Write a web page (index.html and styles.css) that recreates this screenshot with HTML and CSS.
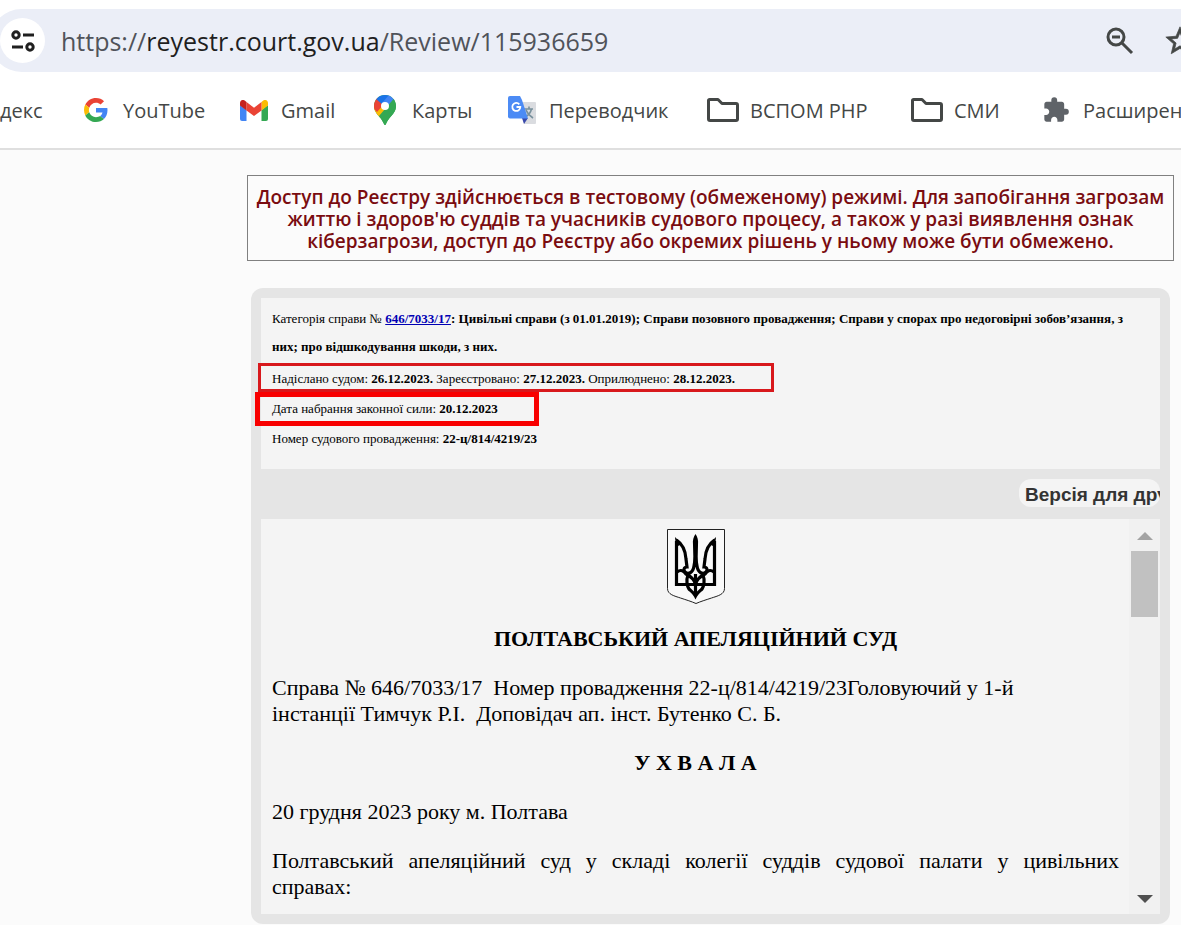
FILE: index.html
```html
<!DOCTYPE html>
<html lang="uk">
<head>
<meta charset="utf-8">
<meta name="viewport" content="width=device-width, initial-scale=1">
<title>Єдиний державний реєстр судових рішень</title>
<link rel="stylesheet" href="styles.css">
</head>
<body>
<header class="chrome">
  <div class="address">
    <button class="site-info" type="button" aria-label="Відомості про сайт">
      <svg width="24" height="24" viewBox="0 0 24 24" fill="none" stroke="#1f1f1f" stroke-width="3"><circle cx="5" cy="6" r="3.2"/><path d="M12 6h11M1 18h11"/><circle cx="19" cy="18" r="3.2"/></svg>
    </button>
    <div class="url"><span class="dim">https://</span>reyestr.court.gov.ua<span class="dim">/Review/115936659</span></div>
    <button class="tool" type="button" aria-label="Масштаб">
      <svg width="28" height="28" viewBox="0 0 28 28" fill="none" stroke="#444746" stroke-width="3"><circle cx="10" cy="10" r="8"/><path d="M6 10h8M15.500 15.500L26 26"/></svg>
    </button>
    <button class="tool star" type="button" aria-label="Закладка">
      <svg width="34" height="34" viewBox="0 0 24 24" fill="#444746" stroke="#444746" stroke-width=".5"><path d="M22 9.240l-7.190-.62L12 2 9.190 8.630 2 9.240l5.460 4.730L5.820 21 12 17.270 18.180 21l-1.630-7.030L22 9.240zM12 15.400l-3.760 2.270 1-4.280-3.320-2.880 4.380-.38L12 6.100l1.710 4.040 4.380.38-3.320 2.880 1 4.280L12 15.400z"/></svg>
    </button>
  </div>
  <nav class="bookmarks">
    <a href="#" class="bookmark">декс</a>
    <a href="#" class="bookmark"><span class="icon"><svg width="24" height="24" viewBox="0 0 48 48"><path fill="#ea4335" d="M24 9.500c3.540 0 6.710 1.220 9.210 3.600l6.850-6.850C35.900 2.380 30.470 0 24 0 14.620 0 6.510 5.380 2.560 13.220l7.980 6.190C12.430 13.720 17.740 9.500 24 9.500z"/><path fill="#4285f4" d="M46.980 24.550c0-1.570-.15-3.090-.38-4.550H24v9.020h12.940c-.58 2.960-2.260 5.480-4.780 7.180l7.730 6c4.510-4.180 7.090-10.360 7.090-17.650z"/><path fill="#fbbc05" d="M10.530 28.590c-.48-1.450-.76-2.990-.76-4.590s.27-3.140.76-4.590l-7.980-6.190C.92 16.460 0 20.120 0 24s.92 7.540 2.560 10.780l7.970-6.190z"/><path fill="#34a853" d="M24 48c6.480 0 11.930-2.130 15.890-5.810l-7.730-6c-2.150 1.450-4.920 2.300-8.160 2.300-6.260 0-11.570-4.220-13.470-9.910l-7.980 6.190C6.510 42.620 14.620 48 24 48z"/></svg></span>YouTube</a>
    <a href="#" class="bookmark"><span class="icon"><svg width="28" height="21" viewBox="0 0 28 21"><path fill="#4285f4" d="M2 21h4.500V10L0 5v14a2 2 0 0 0 2 2z"/><path fill="#34a853" d="M21.500 21H26a2 2 0 0 0 2-2V5l-6.500 5z"/><path fill="#fbbc04" d="M21.500 2v8.500L28 5.500V3c0-2.600-2.800-4-5-2.300z"/><path fill="#ea4335" d="M6.500 10.500V2L14 7.700 21.500 2v8.500L14 16z"/><path fill="#c5221f" d="M0 3v2.500l6.500 5V2L5 .7C2.800-1 0 .4 0 3z"/></svg></span>Gmail</a>
    <a href="#" class="bookmark"><span class="icon"><svg width="22" height="30" viewBox="0 0 22 30"><defs><clipPath id="pin"><path d="M11 0C5 0 0 4.800 0 11c0 5 3 8 6 11.500 2 2.500 3 4.500 4 6.500.5 1.200 1.500 1.200 2 0 1-2.500 2-4 4-6.500 3-3.500 6-6.500 6-11.500C22 4.800 17 0 11 0z"/></clipPath></defs><g clip-path="url(#pin)"><path fill="#34a853" d="M0 0h22v30H0z"/><path fill="#fbbc04" d="M0 13v9l5 2L16 12l-5-6z"/><path fill="#ea4335" d="M0 0v14l3 3 8-9-8-6z"/><path fill="#1a73e8" d="M2 4l7 6 7-10H2z"/><path fill="#4285f4" d="M15 0L8 8l5 5 9-9z"/><path fill="#34a853" d="M20 3.500L5 21v9h17V3z"/></g><circle cx="11" cy="11" r="4" fill="#fff"/></svg></span>Карты</a>
    <a href="#" class="bookmark"><span class="icon"><svg width="28" height="28" viewBox="0 0 28 28"><path fill="#dadce0" d="M13 6h14a1 1 0 0 1 1 1v20a1 1 0 0 1-1 1H16z"/><path fill="#3949ab" d="M14 22h6l-4 6z"/><path fill="none" stroke="#78909c" stroke-width="1.600" d="M16 13h9M21 10.500V13M23.500 13c-1 4-3.500 6.500-6 8M18 14c1.500 3.500 4 6 7 8"/><path fill="#4c8bf5" d="M2 0h10l2 4 6 18.500H2a2 2 0 0 1-2-2V2a2 2 0 0 1 2-2z"/><path fill="none" stroke="#fff" stroke-width="1.800" d="M11.300 8.300A4 4 0 1 0 12.300 11H8.500"/></svg></span>Переводчик</a>
    <a href="#" class="bookmark"><span class="icon"><svg width="32" height="24" viewBox="0 0 32 24" fill="none" stroke="#444746" stroke-width="3" stroke-linejoin="round"><path d="M2.500 1.500h8.500l4 4H29a1.500 1.500 0 0 1 1.500 1.500v14a1.500 1.500 0 0 1-1.500 1.500H3A1.500 1.500 0 0 1 1.500 21V2.500a1 1 0 0 1 1-1z"/></svg></span>ВСПОМ PHP</a>
    <a href="#" class="bookmark"><span class="icon"><svg width="32" height="24" viewBox="0 0 32 24" fill="none" stroke="#444746" stroke-width="3" stroke-linejoin="round"><path d="M2.500 1.500h8.500l4 4H29a1.500 1.500 0 0 1 1.500 1.500v14a1.500 1.500 0 0 1-1.500 1.500H3A1.500 1.500 0 0 1 1.500 21V2.500a1 1 0 0 1 1-1z"/></svg></span>СМИ</a>
    <a href="#" class="bookmark"><span class="icon"><svg width="28" height="28" viewBox="0 0 24 24" fill="#5f6368"><path d="M20.500 11H19V7c0-1.100-.9-2-2-2h-4V3.500a2.500 2.500 0 0 0-5 0V5H4c-1.100 0-1.990.9-1.990 2v3.800H3.500c1.490 0 2.700 1.210 2.700 2.700s-1.210 2.700-2.700 2.700H2V20c0 1.100.9 2 2 2h3.800v-1.500c0-1.490 1.210-2.700 2.700-2.700s2.700 1.210 2.700 2.700V22H17c1.100 0 2-.9 2-2v-4h1.500a2.500 2.500 0 0 0 0-5z"/></svg></span>Расширени</a>
  </nav>
</header>
<main class="page">
  <p class="notice">Доступ до Реєстру здійснюється в тестовому (обмеженому) режимі. Для запобігання загрозам<br>життю і здоров'ю суддів та учасників судового процесу, а також у разі виявлення ознак<br>кіберзагрози, доступ до Реєстру або окремих рішень у ньому може бути обмежено.</p>
  <div class="panel">
    <section class="meta">
      <p class="category">Категорія справи № <a href="#">646/7033/17</a><b>: Цивільні справи (з 01.01.2019); Справи позовного провадження; Справи у спорах про недоговірні зобов’язання, з<br>них; про відшкодування шкоди, з них.</b></p>
      <p class="row dates">Надіслано судом: <b>26.12.2023.</b> Зареєстровано: <b>27.12.2023.</b> Оприлюднено: <b>28.12.2023.</b></p>
      <p class="row force">Дата набрання законної сили: <b>20.12.2023</b></p>
      <p class="row">Номер судового провадження: <b>22-ц/814/4219/23</b></p>
    </section>
    <div class="actions"><button class="print" type="button">Версія для дру</button></div>
    <div class="viewer">
      <article class="document">
        <svg class="emblem" width="58" height="75" viewBox="0 0 58 75" role="img" aria-label="Герб України"><path d="M.5.500h57v59c0 6-7 7.500-13 9.500-6 2-11 3.500-15.500 5.500-4.500-2-9.500-3.500-15.500-5.500C7.500 67 .5 65.500.5 59.500z" fill="#f9f9f9" stroke="#222"/><g fill="none" stroke="#000" stroke-width="3.200"><path d="M9.500 12v43.500h38V12"/><path d="M9.500 11c6 4 9 10 9.500 19l1 8c-3 0-4 3-2 5 3 3 8 1 9-6l1.500-9 1.500 9c1 7 6 9 9 6 2-2 1-5-2-5l1-8c.5-9 3.500-15 9.500-19"/><path d="M10 43c4-3 7-1 9 2 4 2 8 5 9.500 10 1.500-5 5.500-8 9.500-10 2-3 5-5 9-2"/><path d="M21 46c-2 5-1 11 1 14 2 2 5 4 6.500 7 1.500-3 4.500-5 6.500-7 2-3 3-9 1-14M28.500 45v21"/></g><path d="M28.500 5c2 3 3 6 2.500 11l-.5 20h-4L26 16c-.5-5 .5-8 2.500-11zM8 8l7 7-6 3zM49 8l-7 7 6 3z"/></svg>
        <h1>ПОЛТАВСЬКИЙ АПЕЛЯЦІЙНИЙ СУД</h1>
        <p>Справа № 646/7033/17&nbsp; Номер провадження 22-ц/814/4219/23Головуючий у 1-й<br>інстанції Тимчук Р.І.&nbsp; Доповідач ап. інст. Бутенко С. Б.</p>
        <h2>У Х В А Л А</h2>
        <p>20 грудня 2023 року м. Полтава</p>
        <p class="justified"><span class="full-line">Полтавський апеляційний суд у складі колегії суддів судової палати у цивільних</span> справах:</p>
      </article>
      <div class="scrollbar" aria-hidden="true">
        <svg width="16" height="8" viewBox="0 0 16 8"><path d="M8 0l8 8H0z" fill="#a3a3a3"/></svg>
        <div class="thumb"></div>
        <svg class="down" width="16" height="8" viewBox="0 0 16 8"><path d="M0 0h16L8 8z" fill="#505050"/></svg>
      </div>
    </div>
  </div>
</main>
</body>
</html>
```
FILE: styles.css
```css
*, *::after { box-sizing: border-box; }
body {
  margin: 0;
  background: #fbfbfb;
  color: #000;
  font-family: "Liberation Serif", serif;
  overflow: hidden;
}
p, h1, h2 { margin: 0; }
button { border: 0; padding: 0; background: none; font: inherit; }

.chrome {
  padding-top: 9px;
  background: #fff;
  border-bottom: 2px solid #dfdfdf;
  font-family: "Open Sans", "Noto Sans", sans-serif;
  overflow: hidden;
}
.address {
  display: flex;
  align-items: center;
  height: 63px;
  margin-left: -10px;
  padding-left: 10px;
  border-radius: 32px 0 0 32px;
  background: #ebeef7;
}
.site-info {
  display: flex;
  align-items: center;
  justify-content: center;
  width: 45px;
  height: 45px;
  border-radius: 50%;
  background: #fff;
}
.url {
  flex: 1;
  margin-left: 16px;
  font-size: 25px;
  color: #1f1f1f;
  white-space: nowrap;
}
.dim { color: #50535a; }
.tool { display: flex; }
.star { margin: 0 -16px 0 29px; }

.bookmarks {
  display: grid;
  grid-template-columns: 80px 158px 131px 137px 201px 204px 129px auto;
  align-items: center;
  height: 76px;
}
.bookmark {
  display: flex;
  align-items: center;
  gap: 11px;
  font-size: 20px;
  color: #444746;
  text-decoration: none;
  white-space: nowrap;
}
.icon {
  display: flex;
  flex: none;
  justify-content: center;
  width: 32px;
}

.page { padding: 25px 7px 2px 247px; }
.notice {
  padding: 10px 8px 8px;
  border: 1px solid #808080;
  color: #7a0c10;
  font: 600 19px/22px "Open Sans", "Noto Sans", sans-serif;
  text-align: center;
  white-space: nowrap;
}
.panel {
  margin: 27px 4px 0;
  padding: 10px;
  border-radius: 12px;
  background: #e5e5e5;
}
.meta {
  padding: 7px 11px 15px;
  background: #f4f4f4;
  font-size: 13px;
  line-height: 28px;
  white-space: nowrap;
}
.meta a { color: #0000b4; font-weight: bold; }
.category { margin-bottom: 3px; }
.row { position: relative; line-height: 30px; }
.dates::after, .force::after {
  content: "";
  position: absolute;
  border: 3px solid #d8181c;
}
.dates::after { left: -14px; top: -1px; width: 516px; height: 29px; }
.force::after { left: -17px; top: -2px; width: 284px; height: 34px; border: 5px solid #f80000; }

.actions { display: flex; justify-content: flex-end; padding: 10px 0 12px; }
.print {
  width: 141px;
  height: 28px;
  padding-left: 6px;
  border-radius: 12px;
  background: #f4f4f4;
  color: #333;
  font: bold 19px/32px "Liberation Sans", Arial, sans-serif;
  text-align: left;
  white-space: nowrap;
  overflow: hidden;
}
.viewer { display: flex; background: #f4f4f4; }
.document {
  flex: 1;
  padding: 10px 10px 14px 11px;
  font-size: 22px;
  line-height: 26px;
}
.document p, .document h1, .document h2 { margin-bottom: 23px; }
.document p:last-child { margin-bottom: 0; }
.document h1, .document h2 { font-size: 22px; text-align: center; }
.emblem { display: block; margin: 0 auto 22px; }
.full-line { display: block; text-align: justify; text-align-last: justify; }
.scrollbar {
  display: flex;
  flex-direction: column;
  align-items: center;
  width: 31px;
  padding: 13px 0 11px;
  background: #f1f1f1;
}
.thumb { width: 27px; height: 66px; margin-top: 11px; background: #c1c1c1; }
.down { margin-top: auto; }
```
